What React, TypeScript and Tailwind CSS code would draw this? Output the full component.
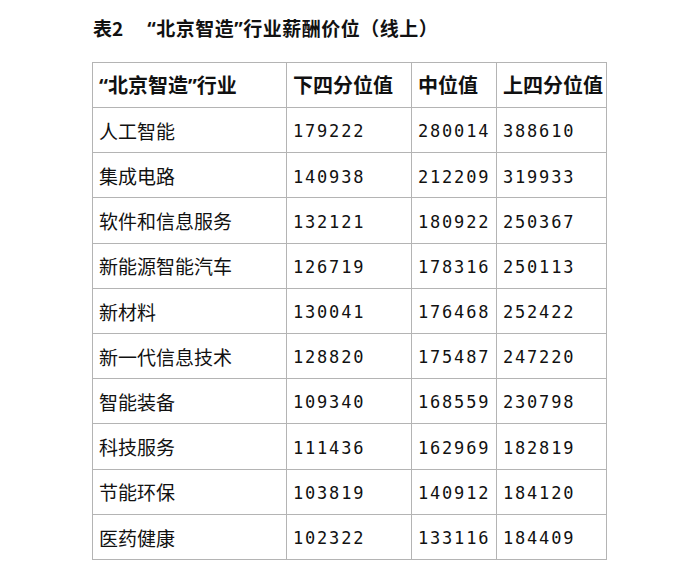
const rows: [string, string, string, string][] = [
  ['人工智能', '179222', '280014', '388610'],
  ['集成电路', '140938', '212209', '319933'],
  ['软件和信息服务', '132121', '180922', '250367'],
  ['新能源智能汽车', '126719', '178316', '250113'],
  ['新材料', '130041', '176468', '252422'],
  ['新一代信息技术', '128820', '175487', '247220'],
  ['智能装备', '109340', '168559', '230798'],
  ['科技服务', '111436', '162969', '182819'],
  ['节能环保', '103819', '140912', '184120'],
  ['医药健康', '102322', '133116', '184409'],
]

const cjk = { fontFamily: '"Noto Sans CJK SC", "Noto Sans", sans-serif' }
const mono = { fontFamily: '"DejaVu Sans Mono", "Liberation Mono", monospace' }
const latin = { fontFamily: '"Noto Sans", "Liberation Sans", sans-serif' }

// 北京智造 wrapped in narrow latin quotes, as in the source
function Bjzz() {
  return (
    <>
      <span style={latin}>“</span>北京智造<span style={latin}>”</span>
    </>
  )
}

export default function App() {
  return (
    <div className="w-[700px] h-[576px] bg-white text-[#111]" style={cjk}>
      <div className="pl-[93px] pt-[14px] h-[62px] flex items-start gap-[24px] text-[19px] font-bold leading-[28px]">
        <span>表2</span>
        <span className="tracking-[0.5px]">
          <Bjzz />行业薪酬价位（线上）
        </span>
      </div>
      <table className="ml-[92px] border-collapse table-fixed w-[515px]">
        <colgroup>
          <col className="w-[194px]" />
          <col className="w-[125px]" />
          <col className="w-[85px]" />
          <col className="w-[110px]" />
        </colgroup>
        <thead>
          <tr className="h-[45px]">
            <th className="border border-[#b4b4b4] px-[6px] text-left text-[20px] font-bold whitespace-nowrap">
              <Bjzz />行业
            </th>
            {['下四分位值', '中位值', '上四分位值'].map((h) => (
              <th
                key={h}
                className="border border-[#b4b4b4] px-[6px] text-left text-[20px] font-bold whitespace-nowrap"
              >
                {h}
              </th>
            ))}
          </tr>
        </thead>
        <tbody>
          {rows.map((r) => (
            <tr key={r[0]} className="h-[45.2px]">
              <td className="border border-[#b4b4b4] px-[6px] pt-[2px] text-[19px] whitespace-nowrap">{r[0]}</td>
              {r.slice(1).map((v, i) => (
                <td
                  key={i}
                  className="border border-[#b4b4b4] px-[6px] pt-[4px] text-[17px] tracking-[1.8px] whitespace-nowrap"
                  style={mono}
                >
                  {v}
                </td>
              ))}
            </tr>
          ))}
        </tbody>
      </table>
    </div>
  )
}
